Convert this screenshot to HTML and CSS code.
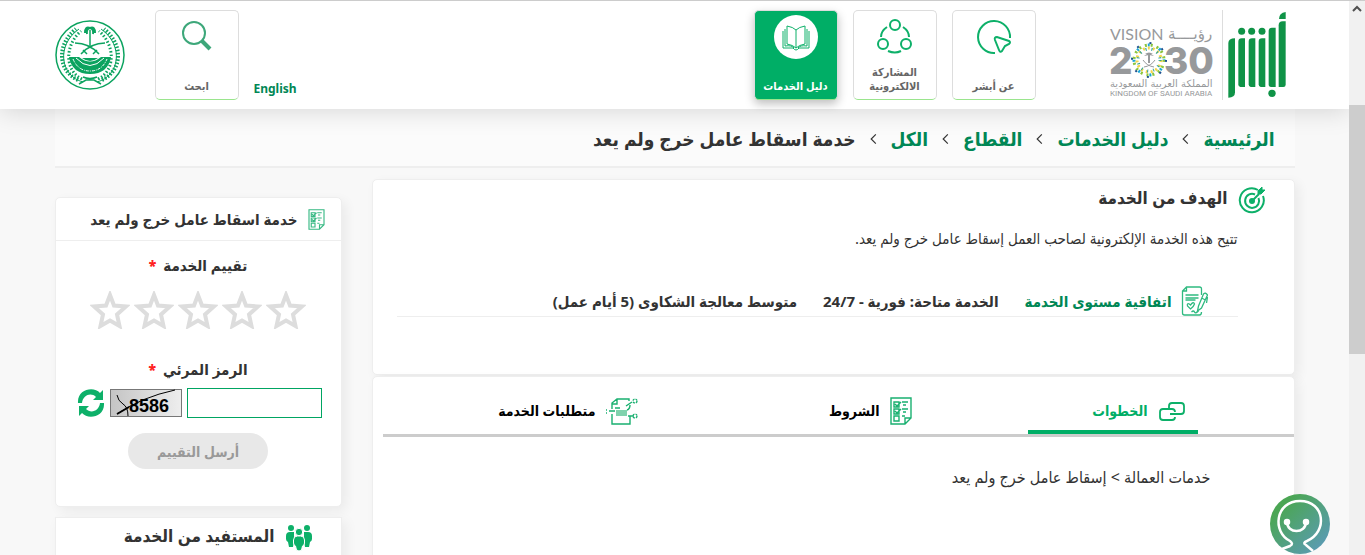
FILE: index.html
```html
<!DOCTYPE html>
<html lang="ar" dir="rtl">
<head>
  <meta charset="UTF-8">
  <title>خدمة اسقاط عامل خرج ولم يعد</title>
  <link rel="stylesheet" href="styles.css">
</head>
<body>

<div class="scrollbar">
  <svg viewBox="0 0 16 16"><path d="M4 10l4-4 4 4"/></svg>
  <div class="thumb"></div>
</div>

<div class="page">
  <header class="header">
    <div class="container header-row">
      <a class="logos" href="#">
        <svg class="absher" viewBox="413 30 174 270" fill="#0f9347">
          <path d="M434 115v162q0 16-20 16V129q0-14 20-14z"/>
          <path d="M464 115v146h-14q-6 0-6-8V125q0-10 10-10z"/>
          <path d="M495 115v146h-14q-6 0-6-8V125q0-10 10-10z"/>
          <path d="M525 115v146h-14q-6 0-6-8V125q0-10 10-10z"/>
          <path d="M556 83v178h-14q-7 0-7-8V93q0-10 10-10z"/>
          <path d="M586 64v190q0 7-7 7h-14V76q0-12 12-12z"/>
          <path d="M586 36v21h-20q0-18 20-21z"/>
          <circle cx="454" cy="94" r="10.500"/><circle cx="484" cy="94" r="10.500"/>
          <circle cx="515" cy="94" r="10.500"/><circle cx="545" cy="280" r="11"/>
        </svg>
        <span class="divider"></span>
        <svg class="vision" viewBox="0 0 106 76" fill="#97999b">
          <text x="0" y="16" class="v-light" font-size="16">VISION</text>
          <text x="58" y="15" class="v-ar" font-size="15">رؤيــــة</text>
          <text x="-1" y="50" class="v-bold" font-size="37">2</text>
          <text x="54" y="50" class="v-bold" font-size="37">30</text>
          <g fill="none" stroke-width="3">
            <circle cx="39" cy="36" r="15" stroke="#8cc63f" stroke-dasharray="2 4"/>
            <circle cx="39" cy="36" r="15" stroke="#1aa7d8" stroke-dasharray="2 10" stroke-dashoffset="3"/>
            <circle cx="39" cy="36" r="12" stroke="#f2d64b" stroke-dasharray="2 3"/>
            <circle cx="39" cy="36" r="11" stroke="#2aa198" stroke-dasharray="1 5"/>
            <circle cx="39" cy="36" r="17" stroke="#1c4f8f" stroke-dasharray="2 11.350" stroke-width="2"/>
          </g>
          <path d="M38 31h2v8h-2zM34 32q5-5 10 0l-5-1zM35 30q4-3 8 0z"/>
          <path d="M33 36q4 6 11 7M45 36q-4 6-11 7" fill="none" stroke="#97999b"/>
          <text x="0" y="63" class="v-ar" font-size="10">المملكة العربية السعودية</text>
          <text x="0" y="72" class="v-king" font-size="8">KINGDOM OF SAUDI ARABIA</text>
        </svg>
      </a>

      <nav class="main-nav">
        <a class="box" href="#">
          <svg viewBox="0 0 44 44" class="box-icon">
            <path d="M23 38A16 16 0 1 1 38 23"/>
            <path d="M23 25q-1-3 2-3l12 4q2 1 0 3l-4 2-3 5q-2 2-3-1z"/>
          </svg>
          <span>عن أبشر</span>
        </a>
        <a class="box" href="#">
          <svg viewBox="0 0 44 44" class="box-icon">
            <circle cx="22" cy="10" r="5"/><circle cx="10" cy="29" r="5"/><circle cx="33" cy="29" r="5"/>
            <path d="M14 12q-6 4-6 10M30 12q6 4 6 10M15 36q7 3 13 0"/>
          </svg>
          <span>المشاركة<br>الالكترونية</span>
        </a>
        <a class="box active" href="#">
          <svg viewBox="0 0 44 44" class="box-icon">
            <path class="thin" d="M22 15q-3-3-9-4v18q6 1 9 4q3-3 9-4V11q-6 1-9 4v18M11 14v17q7-1 9 2M33 14v17q-7-1-9 2M9 16v17h10q3 4 6 0h10V16"/>
          </svg>
          <span>دليل الخدمات</span>
        </a>
      </nav>

      <a class="lang" href="#" lang="en">English</a>
      <a class="box" href="#">
        <svg viewBox="0 0 44 44" class="box-icon search">
          <circle cx="19" cy="18" r="11"/><path d="M27 26l8 8" stroke-width="4"/>
        </svg>
        <span>ابحث</span>
      </a>
      <svg class="emblem" viewBox="0 0 70 70" fill="none" stroke="#0ba35f">
        <circle cx="35" cy="35" r="34" stroke-width="1.500"/>
        <path d="M28 62C5 56 1 25 24 9M42 62C65 56 69 25 46 9"/>
        <path d="M23 60C2 50 2 24 21 9M47 60C68 50 68 24 49 9" stroke-width="4" stroke-dasharray="1.500 1.700"/>
        <path d="M27 59C10 51 9 26 26 11M43 59C60 51 61 26 44 11" stroke-width="3" stroke-dasharray="1.500 2"/>
        <path d="M35 10v16" stroke-width="1.500"/>
        <path d="M35 8q-5-2-5 5M35 8q5-2 5 5M35 8q-4 1-3 6M35 8q4 1 3 6" stroke-width="2"/>
        <path d="M20 23q14 0 24 11M50 23q-14 0-24 11M28 30l4 4M42 30l-4 4" stroke-width="1.500"/>
        <path d="M14 37h10q11 9 22 0h10q-3 17-21 17T14 37z" fill="#0ba35f" stroke="none"/>
        <path d="M18 39q5 12 17 12t17-12" stroke="#fff" stroke-dasharray="3 1 1 1"/>
        <path d="M21 38q14 15 28 0" stroke="#fff"/>
        <path d="M27 38h16q-8 6-16 0" fill="#0ba35f" stroke="none"/>
        <path d="M24 64l7-4h8l7 4M28 57q7 3 14 0" stroke-width="1.500"/>
      </svg>
    </div>
  </header>

  <nav class="container breadcrumb">
    <a href="#">الرئيسية</a>
    <svg viewBox="0 0 6 10"><path d="M5 1L1 5l4 4"/></svg>
    <a href="#">دليل الخدمات</a>
    <svg viewBox="0 0 6 10"><path d="M5 1L1 5l4 4"/></svg>
    <a href="#">القطاع</a>
    <svg viewBox="0 0 6 10"><path d="M5 1L1 5l4 4"/></svg>
    <a href="#">الكل</a>
    <svg viewBox="0 0 6 10"><path d="M5 1L1 5l4 4"/></svg>
    <span>خدمة اسقاط عامل خرج ولم يعد</span>
  </nav>

  <div class="container content">
    <main class="main">
      <section class="card goal">
        <h2>
          <svg class="icon-28" viewBox="0 0 28 28" fill="none" stroke="#0db069" stroke-width="2">
            <path d="M20 4A12 12 0 1 0 25 10"/><path d="M17 8.500A7 7 0 1 0 20.500 12"/>
            <circle cx="14" cy="15" r="3" fill="#0db069" stroke="none"/>
            <path d="M14 15l7-7" stroke-width="2"/><path d="M20 5l4-4v3h3l-4 4h-3z" fill="#0db069" stroke-width="1"/>
          </svg>
          الهدف من الخدمة
        </h2>
        <p>تتيح هذه الخدمة الإلكترونية لصاحب العمل إسقاط عامل خرج ولم يعد.</p>
        <div class="sla">
          <a href="#">
            <svg class="sla-icon" viewBox="0 0 26 30" fill="none" stroke="#2fba80" stroke-width="1.300">
              <path d="M20 9V3q0-2-2-2H5L1 5v22q0 2 2 2h15q2 0 2-3M1 5h4V1M4 9h13M4 12h13M4 14h10"/>
              <path d="M6 20q-1-4 3-1q3-4 4-1q-1 3-4 5zM10 26q2-2 3 0t4-1"/>
              <path d="M16 25l1-5 5-12q2-2 4 1l-6 13zM20 12l4 2M26 11l-1 6"/>
            </svg>
            اتفاقية مستوى الخدمة
          </a>
          <span>الخدمة متاحة: فورية - 24/7</span>
          <span>متوسط معالجة الشكاوى (5 أيام عمل)</span>
        </div>
      </section>

      <section class="card steps">
        <div class="tabs" role="tablist">
          <button class="tab active" role="tab">
            <svg class="tab-icon" viewBox="0 0 28 28" fill="none" stroke="#0db069" stroke-width="1.800">
              <path d="M11 12V9q0-3 3-3h9q3 0 3 3v5q0 3-3 3H12"/>
              <path d="M17 15q0-3-3-3H5q-3 0-3 3v5q0 3 3 3h9q3 0 3-3"/>
            </svg>
            الخطوات
          </button>
          <button class="tab" role="tab">
            <svg class="tab-icon doc" viewBox="0 0 22 28" fill="none" stroke="#19b070" stroke-width="1.400">
              <path d="M1 1h20v20l-6 6H1zM15 27v-6h6M4 5h5v5H4zM4 12h5v5H4zM4 19h5v5H4zM5 7l2 2 4-4M5 14l2 2 4-4M12 5h6M13 8h3M12 12h6M13 15h3M12 19h3"/>
            </svg>
            الشروط
          </button>
          <button class="tab" role="tab">
            <svg class="tab-icon wide" viewBox="0 0 32 28" fill="none" stroke="#19b070" stroke-width="1.400">
              <path d="M6 12V6l5-4h12v2M6 7h5V2M6 17v10h18v-8M24 8q0 4-3 5M20 9l6-4M3 14h6M9 11h5M22 19h6M0 13h1M0 16h1"/>
              <path d="M10 14h11M10 16h11M10 18h11" stroke="#80d2ad" stroke-width="2"/>
              <circle cx="29" cy="4" r="2" stroke-dasharray="2 1"/><circle cx="29" cy="19" r="2" stroke-dasharray="2 1"/>
            </svg>
            متطلبات الخدمة
          </button>
        </div>
        <p>خدمات العمالة &gt; إسقاط عامل خرج ولم يعد</p>
      </section>
    </main>

    <aside class="side">
      <form class="card rating">
        <h3>
          <svg class="side-icon" viewBox="0 0 22 28" fill="none" stroke="#36b983" stroke-width="1.500">
            <path d="M1 1h20v20l-6 6H1zM15 27v-6h6M4 5h5v5H4zM4 12h5v5H4zM4 19h5v5H4zM5 7l2 2 4-4M5 14l2 2 4-4M12 5h6M13 8h3M12 12h6M13 15h3M12 19h3"/>
          </svg>
          خدمة اسقاط عامل خرج ولم يعد
        </h3>
        <fieldset class="stars">
          <legend>تقييم الخدمة <b>*</b></legend>
          <label><input type="radio" name="rate" value="1" aria-label="1"><svg viewBox="0 0 40 38"><path d="M20 4l4 10.500 12 1-9 8 2.500 11.500L20 29.500 10.500 35 13 23.500l-9-8 12-1z"/></svg></label>
          <label><input type="radio" name="rate" value="2" aria-label="2"><svg viewBox="0 0 40 38"><path d="M20 4l4 10.500 12 1-9 8 2.500 11.500L20 29.500 10.500 35 13 23.500l-9-8 12-1z"/></svg></label>
          <label><input type="radio" name="rate" value="3" aria-label="3"><svg viewBox="0 0 40 38"><path d="M20 4l4 10.500 12 1-9 8 2.500 11.500L20 29.500 10.500 35 13 23.500l-9-8 12-1z"/></svg></label>
          <label><input type="radio" name="rate" value="4" aria-label="4"><svg viewBox="0 0 40 38"><path d="M20 4l4 10.500 12 1-9 8 2.500 11.500L20 29.500 10.500 35 13 23.500l-9-8 12-1z"/></svg></label>
          <label><input type="radio" name="rate" value="5" aria-label="5"><svg viewBox="0 0 40 38"><path d="M20 4l4 10.500 12 1-9 8 2.500 11.500L20 29.500 10.500 35 13 23.500l-9-8 12-1z"/></svg></label>
        </fieldset>
        <label class="code-label" for="code">الرمز المرئي <b>*</b></label>
        <div class="captcha">
          <input type="text" id="code">
          <svg class="captcha-img" viewBox="0 0 72 28">
            <defs>
              <linearGradient id="cap" x1="0" x2="1"><stop offset="0" stop-color="#c4c4c4"/><stop offset="1" stop-color="#eee"/></linearGradient>
            </defs>
            <rect x=".5" y=".5" width="71" height="27" fill="url(#cap)" stroke="#777"/>
            <text x="19" y="23">8586</text>
            <path d="M7 25Q32 8 65 1M7 6q1 6 6 9t5 12" fill="none" stroke="#000"/>
            <path d="M7 25l12-7" stroke="#000" stroke-width="2"/>
          </svg>
          <button type="button" class="refresh" aria-label="تحديث">
            <svg viewBox="0 0 28 28" fill="#0db069">
              <path d="M1 14C0 0 17-3 23 4l3-3v10H16l3-3C14 3 6 6 5 14z"/>
              <path d="M27 14c1 14-16 17-22 10l-3 3V17h10l-3 3c5 5 13 2 14-6z"/>
            </svg>
          </button>
        </div>
        <button type="submit" class="send" disabled>أرسل التقييم</button>
      </form>

      <section class="card audience">
        <h2>
          <svg class="icon-28" viewBox="0 0 28 28" fill="#0db069">
            <circle cx="6" cy="4" r="3"/><circle cx="22" cy="4" r="3"/>
            <path d="M1 12q0-4 4-4h4v8l-1 7H4l-1-5q-2-1-2-3zM27 12q0-4-4-4h-4v8l1 7h4l1-5q2-1 2-3z"/>
            <g stroke="#fff"><circle cx="14" cy="8" r="3.700"/><path d="M8.500 16q0-4 4-4h3q4 0 4 4v3q0 2-2 3l-1 4q-2.500 2-5 0l-1-4q-2-1-2-3z"/></g>
          </svg>
          المستفيد من الخدمة
        </h2>
      </section>
    </aside>
  </div>
</div>

<button class="chat" aria-label="المساعد">
  <svg viewBox="0 0 60 60" fill="none" stroke="#fff" stroke-width="2.500">
    <defs>
      <linearGradient id="chat" x1="0.200" y1="0.200" x2="0.900" y2="0.900"><stop offset="0" stop-color="#4ba654"/><stop offset="1" stop-color="#5b9bb5"/></linearGradient>
    </defs>
    <circle cx="30" cy="30" r="30" fill="url(#chat)" stroke="none"/>
    <path d="M12 55l8-3q4-2 0-5C2 38 5 7 30 7s28 31 7 40q-5 2-1 4l7 6"/>
    <path d="M17 28c0 12 19 12 19 0"/>
    <circle cx="17" cy="28" r="2" fill="#fff"/><circle cx="36" cy="28" r="2" fill="#fff"/>
  </svg>
</button>

</body>
</html>
```
FILE: styles.css
```css
* {
  box-sizing: border-box;
}

body {
  margin: 0;
  display: flex;
  height: 100vh;
  overflow: hidden;
  font-family: "Noto Sans", "DejaVu Sans Condensed", sans-serif;
  font-size: 15px;
  color: #333;
  background: #f8f8f8;
  border-top: 1px solid #ccc;
}

a {
  color: #008755;
  text-decoration: none;
}

button, input {
  font: inherit;
}

h2, h3, p {
  margin: 0;
}

.page {
  flex: 1;
  min-width: 0;
  overflow: hidden;
}

.container {
  max-width: 1240px;
  margin: 0 auto;
}

/* header */
.header {
  position: relative;
  background: #fff;
  box-shadow: 0 2px 24px rgba(0, 0, 0, 0.15);
}

.header-row {
  display: flex;
  align-items: flex-end;
  height: 108px;
  padding: 9px 9px 9px 0;
}

.logos {
  display: flex;
  align-items: flex-end;
  height: 90px;
}

.absher {
  width: 58px;
  height: 90px;
}

.divider {
  width: 1px;
  height: 90px;
  margin: 0 5px 0 6px;
  background: #ddd;
}

.vision {
  width: 106px;
  height: 76px;
  direction: ltr;
  overflow: visible;
}

.v-light {
  font-family: Lato, sans-serif;
}

.v-ar {
  font-family: "DejaVu Sans", sans-serif;
}

.v-bold {
  font-family: Inter, sans-serif;
  font-weight: 800;
}

.v-king {
  font-family: Roboto, sans-serif;
}

.main-nav {
  display: flex;
  gap: 15px;
  margin: 0 74px 0 auto;
}

.box {
  display: flex;
  flex-direction: column;
  align-items: center;
  justify-content: space-between;
  width: 84px;
  height: 90px;
  padding: 4px 0 6px;
  border: 1px solid #ddd;
  border-bottom-color: #9ae58d;
  border-radius: 5px;
  color: #666;
  font-size: 11px;
  font-weight: bold;
  line-height: 14px;
  text-align: center;
}

.box-icon {
  width: 44px;
  height: 44px;
  fill: none;
  stroke: #0db069;
  stroke-width: 2;
}

.box-icon.search {
  stroke: #3da77a;
}

.box-icon .thin {
  stroke-width: 1;
}

.box.active {
  background: #00ae66;
  color: #fff;
  box-shadow: 0 4px 10px rgba(0, 0, 0, 0.25);
}

.box.active .box-icon {
  background: #fff;
  border-radius: 50%;
}

.lang {
  margin-left: 15px;
  font-size: 12px;
  font-weight: bold;
  line-height: 22px;
}

.emblem {
  width: 70px;
  height: 70px;
  margin: 0 30px 10px 0;
}

/* breadcrumb */
.breadcrumb {
  display: flex;
  align-items: center;
  gap: 14px;
  height: 59px;
  padding: 3px 20px 0 0;
  border-bottom: 2px solid #eee;
  background: #fbfbfb;
  font-size: 19px;
  font-weight: bold;
}

.breadcrumb svg {
  width: 7px;
  height: 12px;
  fill: none;
  stroke: #333;
}

/* content */
.content {
  display: flex;
  gap: 30px;
  padding-top: 11px;
}

.main {
  flex: 1;
  min-width: 0;
}

.card {
  background: #fff;
  border: 1px solid #eee;
  border-radius: 5px;
  box-shadow: 4px 4px 12px rgba(0, 0, 0, 0.06);
}

.card h2 {
  display: flex;
  gap: 10px;
  font-size: 17px;
  line-height: 24px;
}

.icon-28 {
  width: 28px;
  height: 28px;
}

.goal {
  height: 196px;
  padding: 6px 28px 0 24px;
}

.goal p {
  margin-top: 12px;
  padding-right: 28px;
  line-height: 24px;
}

.sla {
  display: flex;
  align-items: center;
  gap: 26px;
  height: 31px;
  margin: 36px 28px 0 0;
  padding-right: 30px;
  border-bottom: 1px solid #eee;
  font-weight: bold;
}

.sla a {
  display: flex;
  align-items: center;
  gap: 9px;
}

.sla-icon {
  width: 27px;
  height: 30px;
}

.steps {
  height: 300px;
  margin-top: 1px;
}

.tabs {
  display: flex;
  gap: 104px;
  margin-left: 10px;
  padding-right: 96px;
  border-bottom: 3px solid #ccc;
}

.tab {
  display: flex;
  align-items: center;
  gap: 10px;
  width: 170px;
  height: 57px;
  padding: 14px 12px 0;
  border: 0;
  border-bottom: 4px solid transparent;
  background: none;
  color: #000;
  font-size: 14px;
  font-weight: bold;
  white-space: nowrap;
}

.tab.active {
  border-color: #00ae66;
  color: #00ae66;
}

.tab-icon {
  flex: none;
  width: 28px;
  height: 28px;
}

.tab-icon.doc {
  width: 22px;
}

.tab-icon.wide {
  width: 32px;
}

.steps p {
  padding: 28px 83px 0 0;
  font-size: 16px;
  line-height: 24px;
}

/* side column */
.side {
  width: 287px;
  padding-top: 18px;
}

.rating {
  height: 310px;
  text-align: center;
}

.rating h3 {
  display: flex;
  align-items: center;
  gap: 10px;
  height: 43px;
  padding-right: 16px;
  border-bottom: 1px solid #eee;
  font-size: 15px;
}

.side-icon {
  width: 17px;
  height: 21px;
}

.rating b {
  margin-right: 3px;
  color: #f22;
  font-size: 14px;
}

.stars {
  display: flex;
  justify-content: center;
  gap: 4px;
  margin: 0;
  padding: 13px 0 0;
  border: 0;
}

.stars legend {
  width: 100%;
  padding: 12px 0 0;
  font-weight: bold;
  line-height: 24px;
}

.stars label {
  position: relative;
}

.stars input {
  position: absolute;
  margin: 0;
  opacity: 0;
}

.stars svg {
  display: block;
  width: 40px;
  height: 38px;
  fill: none;
  stroke: #ddd;
  stroke-width: 4;
}

.code-label {
  display: block;
  margin-top: 28px;
  font-weight: bold;
  line-height: 24px;
}

.captcha {
  display: flex;
  align-items: center;
  gap: 5px;
  margin-top: 6px;
  padding-right: 19px;
}

.captcha input {
  width: 135px;
  height: 30px;
  border: 1px solid #00a562;
}

.captcha-img {
  width: 72px;
  height: 28px;
  direction: ltr;
}

.captcha-img text {
  font: bold 19px "Liberation Sans", sans-serif;
  font-size: 18px;
}

.refresh {
  width: 28px;
  height: 28px;
  padding: 0;
  border: 0;
  background: none;
}

.refresh svg {
  display: block;
}

.send {
  width: 140px;
  height: 36px;
  margin-top: 15px;
  border: 0;
  border-radius: 18px;
  background: #e8e8e8;
  color: #999;
  font-size: 14px;
  font-weight: bold;
}

.audience {
  height: 200px;
  margin-top: 10px;
  padding: 6px 28px 0 0;
  border-radius: 0;
}

/* scrollbar */
.scrollbar {
  width: 16px;
  background: #f1f1f1;
}

.scrollbar svg {
  display: block;
  width: 16px;
  height: 16px;
  fill: none;
  stroke: #505050;
  stroke-width: 2;
}

.thumb {
  height: 249px;
  margin-top: 88px;
  background: #cdcdcd;
}

.chat {
  position: fixed;
  right: 35px;
  bottom: 1px;
  width: 60px;
  height: 60px;
  padding: 0;
  border: 0;
  background: none;
}
```
